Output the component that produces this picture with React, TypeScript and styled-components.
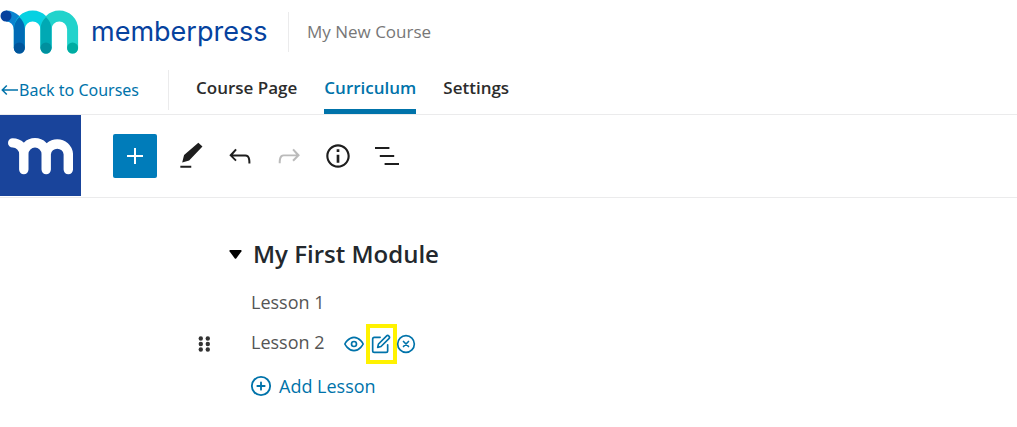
import React from "react";
import styled, { createGlobalStyle } from "styled-components";

const blue = "#0073aa";
const line = "#ebebec";

const GlobalStyle = createGlobalStyle`
  * { box-sizing: border-box; }
  body {
    margin: 0;
    background: #fff;
    color: #23282d;
    font-family: "Open Sans", "Noto Sans", sans-serif;
  }
  button { font-family: inherit; cursor: pointer; }
  h1, h2, ul { margin: 0; padding: 0; }
`;

const Page = styled.div`
  width: 100%;
`;

const Brand = styled.header`
  display: flex;
  align-items: center;
  height: 64px;
`;

const Logo = styled.a`
  display: flex;
  align-items: center;
  gap: 12px;
  width: 288px;
  color: #06429e;
  text-decoration: none;
`;

const Wordmark = styled.span`
  font-family: Inter, sans-serif;
  font-size: 27px;
  line-height: 36px;
`;

const CourseTitle = styled.h1`
  display: flex;
  align-items: center;
  height: 40px;
  padding-left: 18px;
  border-left: 1px solid ${line};
  color: #777;
  font-size: 17px;
  line-height: 24px;
  font-weight: 500;
`;

const Nav = styled.nav`
  display: flex;
  height: 51px;
  border-bottom: 1px solid ${line};
`;

const BackCell = styled.div`
  display: flex;
  align-items: center;
  width: 169px;
  height: 40px;
  margin-top: 6px;
  border-right: 1px solid ${line};
`;

const BackLink = styled.a`
  display: flex;
  align-items: center;
  gap: 1px;
  padding-left: 1px;
  color: ${blue};
  font-family: "Noto Sans", sans-serif;
  font-size: 16px;
  line-height: 24px;
  text-decoration: none;
`;

const Tabs = styled.div`
  display: flex;
  gap: 27px;
  padding-left: 27px;
`;

const Tab = styled.a<{ $active?: boolean }>`
  padding-top: 12px;
  border-bottom: 5px solid ${(p) => (p.$active ? blue : "transparent")};
  color: ${(p) => (p.$active ? blue : "#2c2c2c")};
  font-size: 17px;
  line-height: 24px;
  font-weight: 600;
  text-decoration: none;
`;

const Toolbar = styled.div`
  display: flex;
  align-items: center;
  height: 83px;
  border-bottom: 1px solid ${line};
`;

const HomeTile = styled.a`
  align-self: flex-start;
  display: flex;
  align-items: center;
  justify-content: center;
  width: 81px;
  height: 81px;
  padding-top: 2px;
  background: #19449b;
`;

const AddBlock = styled.button`
  display: flex;
  align-items: center;
  justify-content: center;
  width: 44px;
  height: 44px;
  margin-left: 32px;
  padding: 0;
  border: 0;
  border-radius: 2px;
  background: #007cba;
  color: #fff;
`;

const Tools = styled.div`
  display: flex;
  gap: 17px;
  padding-left: 18px;
`;

const IconButton = styled.button`
  display: flex;
  padding: 0;
  border: 0;
  background: none;
  color: #1e1e1e;
  &:disabled { color: #bbb; }
`;

const Curriculum = styled.main`
  padding: 38px 24px 24px 197px;
`;

const ModuleHeader = styled.div`
  display: flex;
  align-items: center;
  gap: 11px;
  padding-left: 32px;
`;

const ModuleTitle = styled.h2`
  font-size: 24px;
  line-height: 36px;
  font-weight: 600;
`;

const Lessons = styled.ul`
  padding-top: 10px;
  list-style: none;
`;

const Lesson = styled.li`
  display: flex;
  align-items: center;
  height: 40px;
`;

const DragCell = styled.span`
  display: flex;
  width: 54px;
  padding-top: 4px;
`;

const LessonName = styled.span`
  color: #555;
  font-size: 18px;
  line-height: 24px;
`;

const Actions = styled.div`
  display: flex;
  align-items: center;
  padding: 4px 0 0 19px;
`;

const ActionButton = styled(IconButton)<{ $highlight?: boolean }>`
  color: ${blue};
  padding: ${(p) => (p.$highlight ? "6px 2px 6px 1px" : "0")};
  border: ${(p) => (p.$highlight ? "4px solid #fff200" : "0")};
  margin: ${(p) => (p.$highlight ? "0 -1px 0 2px" : "0")};
`;

const AddLesson = styled.button`
  display: flex;
  align-items: center;
  gap: 7px;
  margin: 12px 0 0 53px;
  padding: 0;
  border: 0;
  background: none;
  color: ${blue};
  font-size: 18px;
  line-height: 24px;
`;

const BrandMark = () => (
  <svg width="79" height="44" viewBox="0 0 79 44" fill="none" aria-hidden="true">
    <path d="M6 6C13.5 6 19.3 12 19.3 19.5" stroke="#0a84d0" strokeWidth="11" />
    <path d="M19.3 38V19.3a13.35 13.35 0 0 1 26.7 0V38" stroke="#06d1e2" strokeWidth="11" />
    <path d="M46 38V19.3a13.3 13.3 0 0 1 26.6 0V38" stroke="#22d3cc" strokeWidth="11" strokeLinecap="round" />
    <path d="M19.3 7C22.5 10 24.8 14 24.8 19V38a5.5 5.5 0 0 1-11 0V19C13.8 14 16.2 10 19.3 7z" fill="#006bb5" />
    <path d="M46 7C49.2 10 51.5 14 51.5 19V38a5.5 5.5 0 0 1-11 0V19C40.5 14 42.8 10 46 7z" fill="#00a9b4" />
    <circle cx="6" cy="6" r="5.5" fill="#06429e" />
    <circle cx="19.3" cy="38" r="5.5" fill="#00559b" />
    <circle cx="46" cy="38" r="5.5" fill="#00909e" />
    <circle cx="72.6" cy="38" r="5.5" fill="#00aca2" />
  </svg>
);

const WhiteMark = () => (
  <svg width="65" height="37" viewBox="0 0 65 37" fill="none" stroke="#fff" strokeWidth="9.4" strokeLinecap="round" aria-hidden="true">
    <path d="M4.7 4.9C11 4.9 15.8 9.8 15.8 16V31.6M15.8 16a11.2 11.2 0 0 1 22.4 0V31.6M38.2 16a11.1 11.1 0 0 1 22.1 0V31.6" />
  </svg>
);

const EditorIcon = ({ d }: { d: string }) => (
  <svg width="32" height="32" viewBox="0 0 24 24" fill="currentColor" aria-hidden="true">
    <path d={d} />
  </svg>
);

const LineIcon = ({ size, children }: { size: number; children: React.ReactNode }) => (
  <svg
    width={size}
    height={size}
    viewBox="0 0 24 24"
    fill="none"
    stroke="currentColor"
    strokeWidth="2"
    strokeLinecap="round"
    strokeLinejoin="round"
    aria-hidden="true"
  >
    {children}
  </svg>
);

const undoPath =
  "M18.3 11.7c-.6-.6-1.4-.9-2.3-.9H6.7l2.9-3.3-1.1-1-4.5 5L8.5 16l1-1-2.7-2.7H16c.5 0 .9.2 1.3.5 1 1 1 3.4 1 4.5v.3h1.5v-.2c0-1.5 0-4.3-1.5-5.7z";
const redoPath =
  "M15.6 6.5l-1.1 1 2.9 3.3H8c-.9 0-1.7.3-2.3.9-1.4 1.5-1.4 4.2-1.4 5.6v.2h1.5v-.3c0-1.1 0-3.5 1-4.5.3-.3.7-.5 1.3-.5h9.2L14.5 15l1.1 1.1 4.6-4.6-4.6-5z";
const infoPath =
  "M12 3.2c-4.8 0-8.8 3.9-8.8 8.8 0 4.8 3.9 8.8 8.8 8.8 4.8 0 8.8-3.9 8.8-8.8 0-4.8-4-8.8-8.8-8.8zm0 16c-4 0-7.2-3.3-7.2-7.2C4.8 8 8 4.8 12 4.8s7.2 3.3 7.2 7.2c0 4-3.2 7.2-7.2 7.2zM11 17h2v-6h-2v6zm0-8h2V7h-2v2z";

export default function App() {
  return (
    <Page>
      <GlobalStyle />
      <Brand>
        <Logo href="#home">
          <BrandMark />
          <Wordmark>memberpress</Wordmark>
        </Logo>
        <CourseTitle>My New Course</CourseTitle>
      </Brand>

      <Nav>
        <BackCell>
          <BackLink href="#courses">
            <svg width="17" height="12" viewBox="0 0 17 12" fill="none" stroke="currentColor" strokeWidth="1.5" aria-hidden="true">
              <path d="M17 6H1.5M5.8 1.5L1.3 6l4.5 4.5" />
            </svg>
            Back to Courses
          </BackLink>
        </BackCell>
        <Tabs>
          <Tab href="#page">Course Page</Tab>
          <Tab href="#curriculum" $active aria-current="page">Curriculum</Tab>
          <Tab href="#settings">Settings</Tab>
        </Tabs>
      </Nav>

      <Toolbar>
        <HomeTile href="#dashboard" aria-label="Dashboard">
          <WhiteMark />
        </HomeTile>
        <AddBlock aria-label="Add block">
          <EditorIcon d="M11.25 12.75V18h1.5v-5.25H18v-1.5h-5.25V6h-1.5v5.25H6v1.5z" />
        </AddBlock>
        <Tools>
          <IconButton aria-label="Edit">
            <EditorIcon d="M20.6 4.9L17.5 2 6.8 11.3l-1.4 5.6 5.2-1.6zM4 20.8h8.2v-1.5H4z" />
          </IconButton>
          <IconButton aria-label="Undo">
            <EditorIcon d={undoPath} />
          </IconButton>
          <IconButton aria-label="Redo" disabled>
            <EditorIcon d={redoPath} />
          </IconButton>
          <IconButton aria-label="Details">
            <EditorIcon d={infoPath} />
          </IconButton>
          <IconButton aria-label="Outline">
            <EditorIcon d="M13.8 5.2H3v1.5h10.8V5.2zm-3.6 12v1.5H21v-1.5H10.2zm7.2-6H6.6v1.5h10.8v-1.5z" />
          </IconButton>
        </Tools>
      </Toolbar>

      <Curriculum>
        <ModuleHeader>
          <IconButton aria-label="Collapse module" aria-expanded="true">
            <svg width="13" height="9" viewBox="0 0 13 9" aria-hidden="true">
              <path d="M1.2 0h10.6q1.2.3.6 1.4L7.2 8.4q-.7.8-1.4 0L.6 1.4Q0 .3 1.2 0z" fill="#000" />
            </svg>
          </IconButton>
          <ModuleTitle>My First Module</ModuleTitle>
        </ModuleHeader>
        <Lessons>
          <Lesson>
            <DragCell />
            <LessonName>Lesson 1</LessonName>
          </Lesson>
          <Lesson>
            <DragCell>
              <svg width="14" height="16" viewBox="0 0 14 16" fill="#333" aria-hidden="true">
                {[2.5, 8, 13.5].map((y) => (
                  <g key={y}>
                    <circle cx="3.8" cy={y} r="2.2" />
                    <circle cx="10.8" cy={y} r="2.2" />
                  </g>
                ))}
              </svg>
            </DragCell>
            <LessonName>Lesson 2</LessonName>
            <Actions>
              <ActionButton aria-label="View lesson">
                <LineIcon size={20}>
                  <path d="M1 12s4-8 11-8 11 8 11 8-4 8-11 8-11-8-11-8z" />
                  <circle cx="12" cy="12" r="3" />
                </LineIcon>
              </ActionButton>
              <ActionButton aria-label="Edit lesson" $highlight>
                <LineIcon size={20}>
                  <path d="M11 4H4a2 2 0 0 0-2 2v14a2 2 0 0 0 2 2h14a2 2 0 0 0 2-2v-7" />
                  <path d="M18.5 2.5a2.121 2.121 0 0 1 3 3L12 15l-4 1 1-4 9.5-9.5z" />
                </LineIcon>
              </ActionButton>
              <ActionButton aria-label="Remove lesson">
                <LineIcon size={20}>
                  <circle cx="12" cy="12" r="10" />
                  <path d="M15 9l-6 6M9 9l6 6" />
                </LineIcon>
              </ActionButton>
            </Actions>
          </Lesson>
        </Lessons>
        <AddLesson>
          <LineIcon size={22}>
            <circle cx="12" cy="12" r="10" />
            <path d="M12 8v8M8 12h8" />
          </LineIcon>
          Add Lesson
        </AddLesson>
      </Curriculum>
    </Page>
  );
}
